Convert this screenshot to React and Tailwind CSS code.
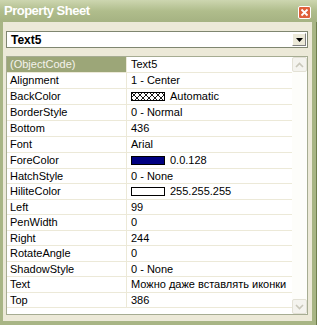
import React from 'react';

const rows = [
  { name: '(ObjectCode)', value: 'Text5', selected: true },
  { name: 'Alignment', value: '1 - Center' },
  { name: 'BackColor', value: 'Automatic', swatch: 'hatch' },
  { name: 'BorderStyle', value: '0 - Normal' },
  { name: 'Bottom', value: '436' },
  { name: 'Font', value: 'Arial' },
  { name: 'ForeColor', value: '0.0.128', swatch: 'navy' },
  { name: 'HatchStyle', value: '0 - None', short: true },
  { name: 'HiliteColor', value: '255.255.255', swatch: 'white' },
  { name: 'Left', value: '99', short: true },
  { name: 'PenWidth', value: '0' },
  { name: 'Right', value: '244', short: true },
  { name: 'RotateAngle', value: '0' },
  { name: 'ShadowStyle', value: '0 - None', short: true },
  { name: 'Text', value: 'Можно даже вставлять иконки' },
  { name: 'Top', value: '386', short: true },
];

const Swatch = ({ kind }) => {
  if (kind === 'hatch') {
    return (
      <svg width="34" height="9" className="shrink-0">
        <defs>
          <pattern id="xh" width="6" height="6" patternUnits="userSpaceOnUse">
            <path d="M0 0 L6 6 M6 0 L0 6" stroke="#000" strokeWidth="0.9" />
          </pattern>
        </defs>
        <rect x="0.5" y="0.5" width="33" height="8" fill="#fff" stroke="#000" />
        <rect x="1" y="1" width="32" height="7" fill="url(#xh)" />
      </svg>
    );
  }
  return (
    <div
      className={`w-[34px] h-[9px] shrink-0 border border-black ${
        kind === 'navy' ? 'bg-[#000080]' : 'bg-white'
      }`}
    />
  );
};

const ScrollBtn = ({ up }) => (
  <div className="h-[15px] w-[15px] rounded-[2px] border border-[#E3E1D5] bg-[#F4F3EE] flex items-center justify-center">
    <svg width="9" height="6" viewBox="0 0 9 6">
      <path
        d={up ? 'M1 5 L4.5 1.5 L8 5' : 'M1 1 L4.5 4.5 L8 1'}
        fill="none"
        stroke="#C9C7BA"
        strokeWidth="1.6"
      />
    </svg>
  </div>
);

export default function App() {
  return (
    <div
      className="w-[317px] h-[325px] flex flex-col bg-[#A8B585] overflow-hidden text-[11px] text-black"
      style={{ fontFamily: '"Liberation Sans", Arial, sans-serif' }}
    >
      {/* Title bar */}
      <div className="h-[22px] shrink-0 flex items-center justify-between pl-[4px] pr-[6px] bg-gradient-to-b from-[#CDD6B0] via-[#B0BD8C] to-[#A5B282]">
        <span className="text-white font-bold text-[13px] tracking-[-0.5px]">Property Sheet</span>
        <div className="w-[13px] h-[13px] mt-[2px] rounded-[2px] border border-white bg-[#E0603A] flex items-center justify-center">
          <svg width="9" height="9" viewBox="0 0 9 9">
            <path d="M1.5 1.5 L7.5 7.5 M7.5 1.5 L1.5 7.5" stroke="#fff" strokeWidth="1.8" />
          </svg>
        </div>
      </div>

      {/* Frame */}
      <div className="flex-1 flex pl-[3px] pr-[4px] pb-[4px] border-r border-[#6F7E4C]">
        <div className="flex-1 bg-[#ECE9D8] flex flex-col pt-[9px] pl-[3px] pr-[2px]">
          {/* Combo */}
          <div className="h-[17px] w-[302px] flex items-center bg-white border border-[#7F8670]">
            <span className="flex-1 pl-[4px] font-bold text-[12px]">Text5</span>
            <div className="w-[14px] h-[13px] mr-[1px] bg-[#ECE9D8] border border-t-white border-l-white border-r-[#808080] border-b-[#808080] flex items-center justify-center">
              <svg width="7" height="4" viewBox="0 0 7 4">
                <path d="M0 0 H7 L3.5 4 Z" fill="#000" />
              </svg>
            </div>
          </div>

          {/* Grid */}
          <div className="mt-[8px] w-[302px] h-[259px] flex border border-[#A6AC92] bg-white">
            <div className="flex-1 flex flex-col">
              {rows.map((r) => (
                <div
                  key={r.name}
                  className={`${r.short ? 'h-[15px]' : 'h-[16px]'} flex border-b border-[#ECE9D8]`}
                >
                  <div
                    className={`w-[120px] pl-[3px] flex items-center border-r border-[#ECE9D8] whitespace-nowrap ${
                      r.selected ? 'bg-[#9CA678] text-[#F4F3EC]' : ''
                    }`}
                  >
                    {r.name}
                  </div>
                  <div className="flex-1 pl-[4px] flex items-center gap-[5px] whitespace-nowrap overflow-hidden">
                    {r.swatch && <Swatch kind={r.swatch} />}
                    <span>{r.value}</span>
                  </div>
                </div>
              ))}
            </div>
            <div className="w-[15px] flex flex-col justify-between bg-[#FDFDFA]">
              <ScrollBtn up />
              <ScrollBtn />
            </div>
          </div>
        </div>
      </div>
    </div>
  );
}
